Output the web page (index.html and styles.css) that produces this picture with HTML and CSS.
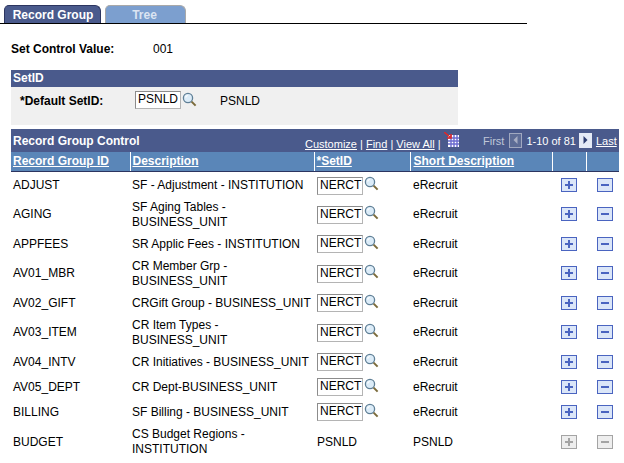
FILE: index.html
```html
<!DOCTYPE html>
<html lang="en">
<head>
  <meta charset="UTF-8" />
  <title>Record Group</title>
  <link rel="stylesheet" href="styles.css">
</head>
<body>

  <svg class="defs" width="0" height="0">
    <symbol id="lens" viewBox="0 0 15 15">
      <circle cx="6" cy="6" r="4.6" fill="#dcecf8" stroke="#5f7f96" stroke-width="1.3"/>
      <path d="M3.6 5.5a2.6 2.6 0 0 1 2.2-2" fill="none" stroke="#fff" stroke-width="1.2"/>
      <path d="M9.6 9.6l4 4" stroke="#7a6a3a" stroke-width="2"/>
    </symbol>
    <symbol id="plus" viewBox="0 0 16 14">
      <rect class="btn-bg" x=".5" y=".5" width="15" height="13" stroke="currentColor"/>
      <path d="M8 3v8M4 7h8" stroke="currentColor" stroke-width="2"/>
    </symbol>
    <symbol id="minus" viewBox="0 0 16 14">
      <rect class="btn-bg" x=".5" y=".5" width="15" height="13" stroke="currentColor"/>
      <path d="M4 7h8" stroke="currentColor" stroke-width="2"/>
    </symbol>
  </svg>

  <div class="tabs">
    <a class="tab active">Record Group</a>
    <a class="tab">Tree</a>
  </div>

  <div class="control-value">
    <span class="label">Set Control Value:</span>
    <span>001</span>
  </div>

  <div class="setid-box">
    <div class="box-title">SetID</div>
    <div class="box-body">
      <span class="label default-label">*Default SetID:</span>
      <span class="field">PSNLD</span>
      <svg class="lens"><use href="#lens"/></svg>
      <span class="default-desc">PSNLD</span>
    </div>
  </div>

  <div class="grid">
    <div class="grid-nav">
      <span class="grid-title">Record Group Control</span>
      <span class="nav-links">
        <a>Customize</a> | <a>Find</a> | <a>View All</a> |
        <svg class="grid-icon" width="15" height="15" viewBox="0 0 15 15">
          <path d="M4 3h11v12H4z" fill="#ffffff"/>
          <path d="M4 6h11M4 9h11M4 12h11M7 3v12M10 3v12M13 3v12" stroke="#6a6ad0" stroke-width="1.4"/>
          <path d="M0 0l6 5M3 6h4V2" fill="none" stroke="#e02828" stroke-width="1.6"/>
        </svg>
      </span>
      <span class="pager">
        <span class="first">First</span>
        <svg class="arrow" width="13" height="15" viewBox="0 0 13 15">
          <rect x=".5" y=".5" width="12" height="14" fill="#5d6c96" stroke="#a0a8c0"/>
          <path d="M8.5 3v8L4.5 7z" fill="#a8aec4"/>
        </svg>
        <span class="count">1-10 of 81</span>
        <svg class="arrow" width="13" height="15" viewBox="0 0 13 15">
          <rect width="13" height="15" fill="#e4eaf6"/>
          <path d="M4.5 3v8l4-4z" fill="#2c3c70"/>
        </svg>
        <a>Last</a>
      </span>
    </div>

    <table>
      <colgroup>
        <col class="c-id"><col class="c-desc"><col class="c-set"><col class="c-short"><col class="c-btn"><col class="c-btn2">
      </colgroup>
      <thead>
        <tr>
          <th><a>Record Group ID</a></th>
          <th><a>Description</a></th>
          <th><a>*SetID</a></th>
          <th class="short"><a>Short Description</a></th>
          <th></th>
          <th></th>
        </tr>
      </thead>
      <tbody>
        <tr><td>ADJUST</td><td>SF - Adjustment - INSTITUTION</td><td class="set"><span class="field">NERCT</span><svg class="lens"><use href="#lens"/></svg></td><td class="short">eRecruit</td><td class="btn"><svg><use href="#plus"/></svg></td><td class="btn"><svg><use href="#minus"/></svg></td></tr>
        <tr><td>AGING</td><td>SF Aging Tables -<br>BUSINESS_UNIT</td><td class="set"><span class="field">NERCT</span><svg class="lens"><use href="#lens"/></svg></td><td class="short">eRecruit</td><td class="btn"><svg><use href="#plus"/></svg></td><td class="btn"><svg><use href="#minus"/></svg></td></tr>
        <tr><td>APPFEES</td><td>SR Applic Fees - INSTITUTION</td><td class="set"><span class="field">NERCT</span><svg class="lens"><use href="#lens"/></svg></td><td class="short">eRecruit</td><td class="btn"><svg><use href="#plus"/></svg></td><td class="btn"><svg><use href="#minus"/></svg></td></tr>
        <tr><td>AV01_MBR</td><td>CR Member Grp -<br>BUSINESS_UNIT</td><td class="set"><span class="field">NERCT</span><svg class="lens"><use href="#lens"/></svg></td><td class="short">eRecruit</td><td class="btn"><svg><use href="#plus"/></svg></td><td class="btn"><svg><use href="#minus"/></svg></td></tr>
        <tr><td>AV02_GIFT</td><td>CRGift Group - BUSINESS_UNIT</td><td class="set"><span class="field">NERCT</span><svg class="lens"><use href="#lens"/></svg></td><td class="short">eRecruit</td><td class="btn"><svg><use href="#plus"/></svg></td><td class="btn"><svg><use href="#minus"/></svg></td></tr>
        <tr><td>AV03_ITEM</td><td>CR Item Types -<br>BUSINESS_UNIT</td><td class="set"><span class="field">NERCT</span><svg class="lens"><use href="#lens"/></svg></td><td class="short">eRecruit</td><td class="btn"><svg><use href="#plus"/></svg></td><td class="btn"><svg><use href="#minus"/></svg></td></tr>
        <tr><td>AV04_INTV</td><td>CR Initiatives - BUSINESS_UNIT</td><td class="set"><span class="field">NERCT</span><svg class="lens"><use href="#lens"/></svg></td><td class="short">eRecruit</td><td class="btn"><svg><use href="#plus"/></svg></td><td class="btn"><svg><use href="#minus"/></svg></td></tr>
        <tr><td>AV05_DEPT</td><td>CR Dept-BUSINESS_UNIT</td><td class="set"><span class="field">NERCT</span><svg class="lens"><use href="#lens"/></svg></td><td class="short">eRecruit</td><td class="btn"><svg><use href="#plus"/></svg></td><td class="btn"><svg><use href="#minus"/></svg></td></tr>
        <tr><td>BILLING</td><td>SF Billing - BUSINESS_UNIT</td><td class="set"><span class="field">NERCT</span><svg class="lens"><use href="#lens"/></svg></td><td class="short">eRecruit</td><td class="btn"><svg><use href="#plus"/></svg></td><td class="btn"><svg><use href="#minus"/></svg></td></tr>
        <tr><td>BUDGET</td><td>CS Budget Regions -<br>INSTITUTION</td><td class="plain">PSNLD</td><td class="short">PSNLD</td><td class="btn off"><svg><use href="#plus"/></svg></td><td class="btn off"><svg><use href="#minus"/></svg></td></tr>
      </tbody>
    </table>
  </div>

</body>
</html>
```

FILE: styles.css
```css
body {
  margin: 0;
  font-family: "Liberation Sans", Arial, sans-serif;
  font-size: 12px;
  color: #000;
  background: #fff;
}

.defs {
  position: absolute;
}

.tabs {
  display: flex;
  gap: 4px;
  width: 523px;
  height: 18px;
  margin-top: 5px;
  padding-left: 4px;
  border-bottom: 1px solid #000;
}

.tab {
  display: block;
  box-sizing: border-box;
  width: 81px;
  height: 18px;
  line-height: 18px;
  padding-right: 2px;
  text-align: center;
  font-weight: bold;
  color: #dbe4f2;
  background: #7c9fcf;
  border: 1px solid #a9a9a9;
  border-bottom: none;
  border-radius: 5px 6px 0 0;
}

.tab.active {
  width: 97px;
  padding: 0 0 0 1px;
  color: #fff;
  background: #4a5a8c;
  border-color: #2c3560;
}

.label {
  font-weight: bold;
}

.control-value {
  display: flex;
  margin: 18px 0 0 11px;
  line-height: 14px;
}

.control-value .label {
  width: 142px;
}

.setid-box {
  width: 447px;
  margin: 14px 0 0 11px;
  background: #f0f0f0;
}

.box-title {
  height: 17px;
  line-height: 17px;
  padding-left: 2px;
  font-weight: bold;
  color: #fff;
  background: #4a5a8c;
}

.box-body {
  display: flex;
  align-items: center;
  height: 38px;
  padding: 0 0 13px 9px;
  box-sizing: border-box;
}

.default-label {
  width: 115px;
  margin-top: 3px;
}

.default-desc {
  margin: 3px 0 0 23px;
}

.field {
  display: inline-block;
  box-sizing: border-box;
  width: 46px;
  height: 18px;
  line-height: 15px;
  padding-left: 2px;
  background: #fff;
  border: 1px solid #b4b4b4;
  border-top-color: #8c8c8c;
  border-left-color: #8c8c8c;
  overflow: hidden;
}

.lens {
  display: inline-block;
  width: 15px;
  height: 15px;
  margin-left: 1px;
  vertical-align: -2px;
}

.grid {
  width: 608px;
  margin: 4px 0 0 11px;
}

.grid-nav {
  display: flex;
  align-items: center;
  height: 23px;
  background: #4a5a8c;
  color: #fff;
}

.grid-title {
  width: 292px;
  padding-left: 2px;
  font-weight: bold;
}

.nav-links {
  width: 178px;
  font-size: 11px;
  white-space: nowrap;
}

.nav-links a, .pager a {
  text-decoration: underline;
  color: #fff;
}

.grid-icon {
  vertical-align: 1px;
}

.pager {
  display: flex;
  align-items: center;
  gap: 4px;
  font-size: 11px;
  white-space: nowrap;
}

.first {
  color: #c0c6d8;
  margin-right: 1px;
}

.count {
  margin-right: -1px;
}

table {
  width: 608px;
  table-layout: fixed;
  border-collapse: collapse;
}

.c-id { width: 119px; }
.c-desc { width: 184px; }
.c-set { width: 96px; }
.c-short { width: 142px; }
.c-btn { width: 34px; }
.c-btn2 { width: 33px; }

th {
  height: 19px;
  padding: 0 0 0 2px;
  text-align: left;
  font-weight: bold;
  color: #fff;
  background: #5a86b8;
  border-left: 1px solid #fff;
  border-bottom: 1px solid #2c3560;
  box-sizing: border-box;
}

th:first-child {
  border-left: none;
}

th a {
  text-decoration: underline;
}

td {
  padding: 0 0 0 2px;
  line-height: 15px;
  vertical-align: middle;
  white-space: nowrap;
}

/* row heights differ in the original grid */
tbody tr:nth-child(1) td { height: 28px; }
tbody tr:nth-child(2) td { height: 30px; }
tbody tr:nth-child(3) td { height: 29px; }
tbody tr:nth-child(4) td { height: 29px; }
tbody tr:nth-child(5) td { height: 29px; }
tbody tr:nth-child(6) td { height: 29px; padding-bottom: 2px; }
tbody tr:nth-child(7) td { height: 25px; }
tbody tr:nth-child(8) td { height: 25px; }
tbody tr:nth-child(9) td { height: 25px; }
tbody tr:nth-child(10) td { height: 35px; }

.set, .plain {
  padding-left: 3px;
}

th.short, td.short {
  padding-left: 3px;
}

.set .field {
  vertical-align: middle;
}

.btn {
  padding: 0;
  text-align: center;
  color: #4a64c0;
  --btn-fill: #dbe6f8;
}

td.btn:last-child {
  padding-left: 4px;
}

.btn svg {
  display: block;
  width: 16px;
  height: 14px;
  margin: 0 auto 1px;
}

.btn-bg {
  fill: var(--btn-fill);
}

.btn.off {
  color: #a4a4a4;
  --btn-fill: #eeeeee;
}
```
